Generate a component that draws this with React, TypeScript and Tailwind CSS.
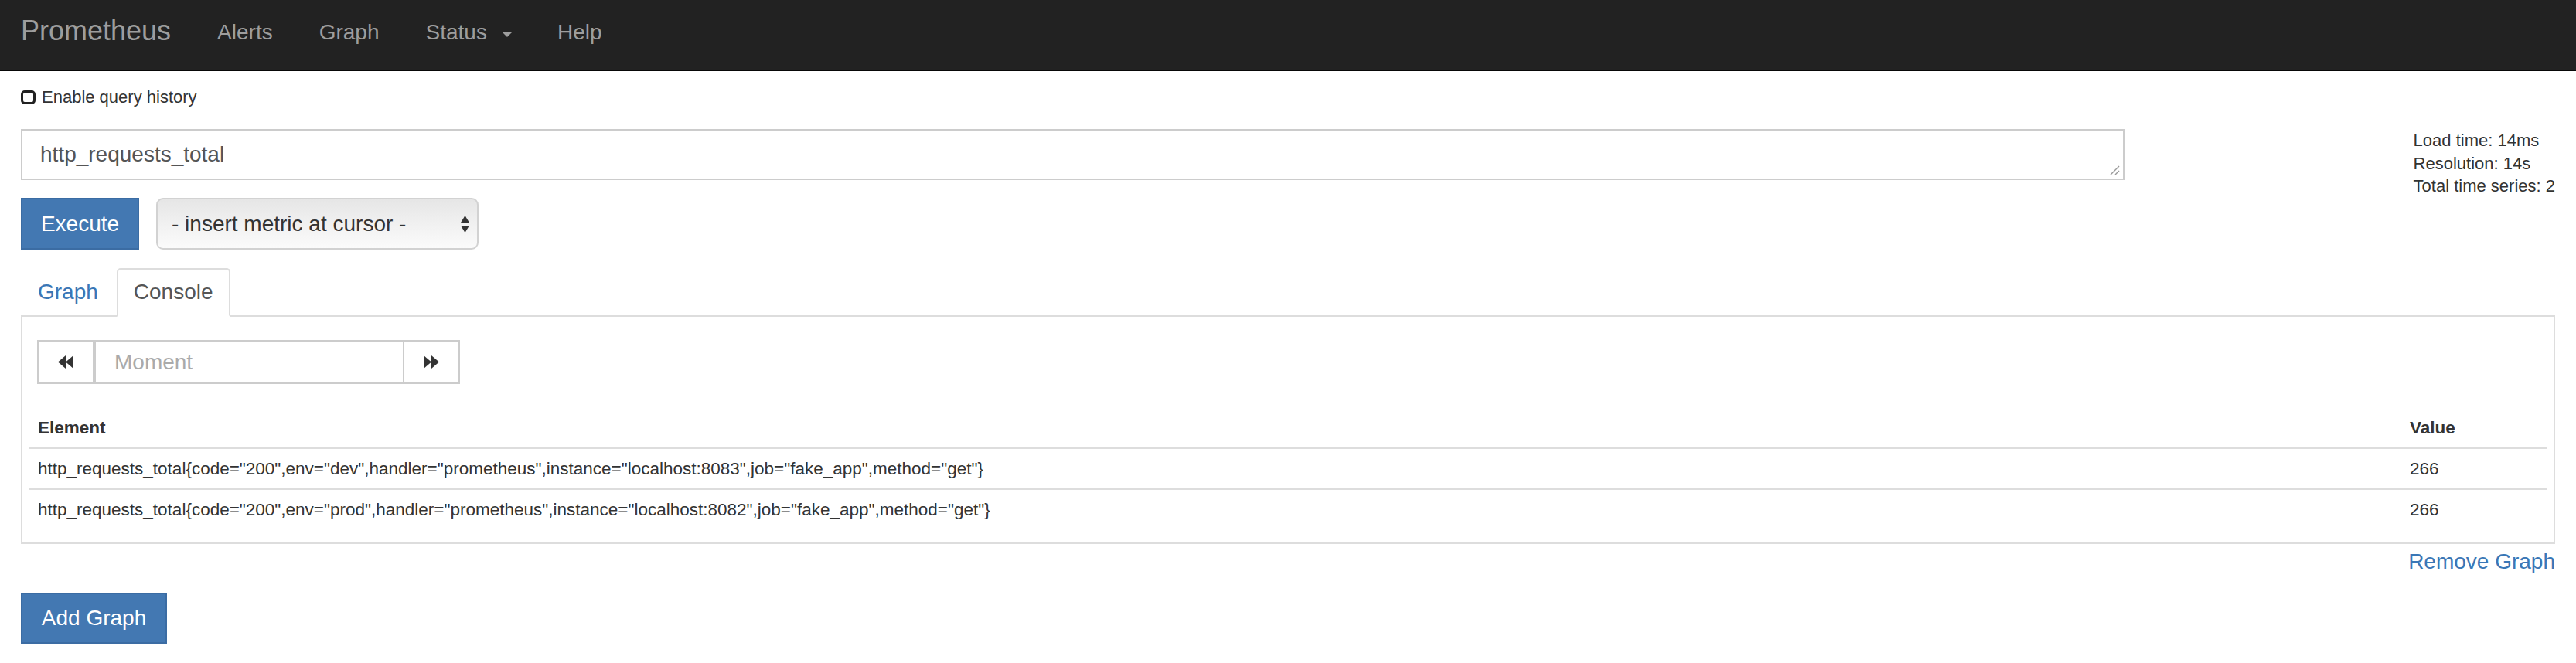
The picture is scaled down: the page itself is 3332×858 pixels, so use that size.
import React from 'react'

const rows = [
  {
    metric:
      'http_requests_total{code="200",env="dev",handler="prometheus",instance="localhost:8083",job="fake_app",method="get"}',
    value: '266',
  },
  {
    metric:
      'http_requests_total{code="200",env="prod",handler="prometheus",instance="localhost:8082",job="fake_app",method="get"}',
    value: '266',
  },
]

function Backward({ flip = false }: { flip?: boolean }) {
  return (
    <svg
      width="20"
      height="17"
      viewBox="0 0 20 17"
      className={flip ? 'rotate-180' : ''}
      fill="#333"
    >
      <polygon points="10,0 0,8.5 10,17" />
      <polygon points="20,0 10,8.5 20,17" />
    </svg>
  )
}

function NavBar() {
  return (
    <nav className="h-[92px] bg-[#222] border-b-2 border-[#080808] flex items-start text-[#9d9d9d]">
      <a className="pl-[27px] pr-[30px] pt-[22px] text-[36px] leading-[36px]">Prometheus</a>
      <a className="px-[30px] pt-[28px] text-[28px] leading-[28px]">Alerts</a>
      <a className="px-[30px] pt-[28px] text-[28px] leading-[28px]">Graph</a>
      <a className="pl-[30px] pr-[28px] pt-[28px] text-[28px] leading-[28px] flex items-center">
        Status
        <span className="ml-[19px] mt-[4px] w-0 h-0 border-t-[7px] border-x-[7px] border-x-transparent border-t-[#9d9d9d]" />
      </a>
      <a className="px-[30px] pt-[28px] text-[28px] leading-[28px]">Help</a>
    </nav>
  )
}

export default function App() {
  return (
    <div className="min-h-screen bg-white text-[#333] font-['Liberation_Sans',Arial,sans-serif]">
      <NavBar />

      <div className="px-[27px]">
        {/* query history toggle */}
        <label className="mt-[22px] h-[24px] flex items-center gap-[8px] text-[22px] leading-[24px]">
          <span className="w-[19px] h-[18px] rounded-[5px] border-[3px] border-[#222] bg-white" />
          Enable query history
        </label>

        <div className="mt-[29px] flex items-start">
          <div className="w-[2721px]">
            <div className="relative h-[66px] border-2 border-[#ccc] flex items-center pl-[23px] text-[28px] text-[#555]">
              http_requests_total
              <svg
                className="absolute right-[4px] bottom-[4px]"
                width="14"
                height="14"
                viewBox="0 0 14 14"
                stroke="#999"
                strokeWidth="1.5"
              >
                <line x1="13" y1="2" x2="2" y2="13" />
                <line x1="13" y1="8" x2="8" y2="13" />
              </svg>
            </div>

            <div className="mt-[23px] flex gap-[22px]">
              <button className="w-[153px] h-[67px] bg-[#4378b2] border-2 border-[#3b6ca3] text-white text-[28px]">
                Execute
              </button>
              <div className="w-[417px] h-[67px] rounded-[9px] border-2 border-[#d2d2d2] bg-linear-to-b from-[#e6e6e6] to-[#fbfbfb] flex items-center justify-between pl-[18px] pr-[10px] text-[28px] text-[#333]">
                - insert metric at cursor -
                <svg width="11" height="22" viewBox="0 0 11 22" fill="#333">
                  <polygon points="5.5,0 11,9 0,9" />
                  <polygon points="0,13 11,13 5.5,22" />
                </svg>
              </div>
            </div>
          </div>

          <div className="ml-auto text-[22px] leading-[29.5px] text-[#333]">
            <div>Load time: 14ms</div>
            <div>Resolution: 14s</div>
            <div>Total time series: 2</div>
          </div>
        </div>

        {/* tabs */}
        <ul className="mt-[24px] flex border-b-2 border-[#ddd] text-[28px] leading-[28px]">
          <li className="mb-[-2px] mr-[2px]">
            <a className="block px-[20px] pt-[15px] pb-[16px] border-2 border-transparent text-[#3a77b6]">
              Graph
            </a>
          </li>
          <li className="mb-[-2px]">
            <a className="block px-[20px] pt-[15px] pb-[16px] border-2 border-[#ddd] border-b-white bg-white rounded-t-[5px] text-[#555]">
              Console
            </a>
          </li>
        </ul>

        <div className="border-2 border-t-0 border-[#ddd] px-[9px] pt-[30px] pb-[17px]">
          <div className="ml-[10px] flex h-[57px] w-[547px]">
            <button className="w-[74px] border-2 border-[#ccc] flex items-center justify-center">
              <Backward />
            </button>
            <div className="flex-1 border-y-2 border-l-2 border-[#ccc] flex items-center pl-[24px] text-[28px] text-[#aaa]">
              Moment
            </div>
            <button className="w-[74px] border-2 border-[#ccc] flex items-center justify-center">
              <Backward flip />
            </button>
          </div>

          <table className="mt-[32px] w-full border-separate border-spacing-0 text-[22.5px] leading-[29px]">
            <thead>
              <tr>
                <th className="text-left font-bold px-[11px] pt-[10px] pb-[10px] border-b-[3px] border-[#ddd]">
                  Element
                </th>
                <th className="w-[188px] text-left font-bold px-[11px] pt-[10px] pb-[10px] border-b-[3px] border-[#ddd]">
                  Value
                </th>
              </tr>
            </thead>
            <tbody>
              {rows.map((r, i) => (
                <tr key={i}>
                  <td className={`px-[11px] py-[11px] ${i > 0 ? 'border-t-2 border-[#ddd]' : ''}`}>
                    {r.metric}
                  </td>
                  <td className={`px-[11px] py-[11px] ${i > 0 ? 'border-t-2 border-[#ddd]' : ''}`}>
                    {r.value}
                  </td>
                </tr>
              ))}
            </tbody>
          </table>
        </div>

        <div className="mt-[9px] text-right text-[28px] leading-[28px] text-[#3a77b6]">Remove Graph</div>

        <button className="mt-[26px] w-[189px] h-[66px] bg-[#4378b2] border-2 border-[#3b6ca3] text-white text-[28px]">
          Add Graph
        </button>
      </div>
    </div>
  )
}
